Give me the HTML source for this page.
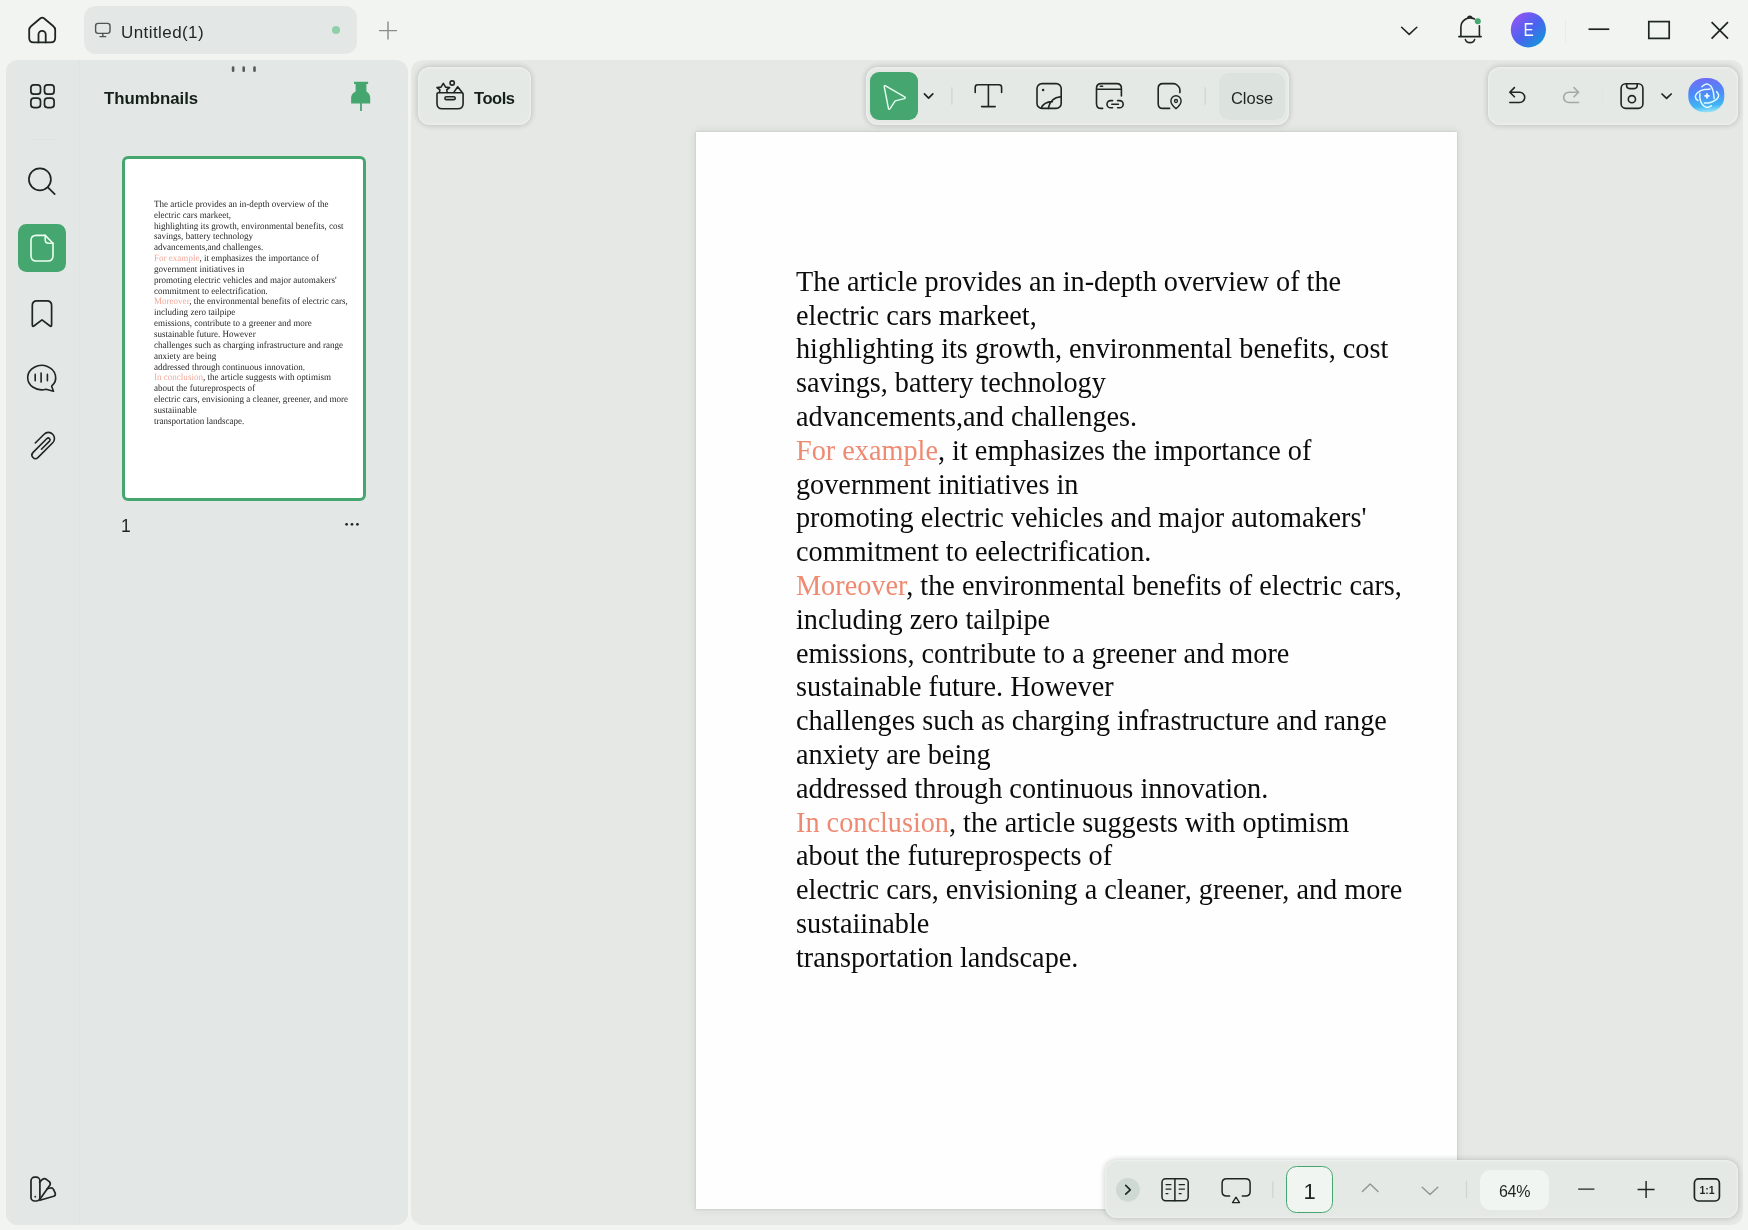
<!DOCTYPE html>
<html lang="en"><head><meta charset="utf-8"><title>Untitled(1)</title>
<style>
*{box-sizing:border-box;margin:0;padding:0}
html,body{width:1748px;height:1230px;overflow:hidden}
body{background:#f2f4f2;font-family:"Liberation Sans","DejaVu Sans",sans-serif;color:#1d2622;position:relative}
.abs{position:absolute}
#tabtxt,#thtitle,#thnum,#toolstxt,#closebtn,#pgbox,#zoombox,#avE{will-change:transform}
svg{position:absolute;overflow:visible}
.ic{fill:none;stroke:#1d2622;stroke-width:1.7;stroke-linecap:round;stroke-linejoin:round}
/* title bar */
#tab{left:84px;top:6px;width:273px;height:48px;border-radius:12px;background:#e3e7e5}
#tabtxt{left:120.5px;top:23px;font-size:17px;line-height:20px;color:#1d2622;letter-spacing:.42px}
#tabdot{left:332px;top:26px;width:8px;height:8px;border-radius:50%;background:#8fd0a9}
/* panels */
#left{left:6px;top:60px;width:402px;height:1165.4px;border-radius:12px;background:#e3e7e5}
#iconcol{left:6px;top:60px;width:74px;height:1165.4px;border-radius:12px 0 0 12px;background:#e3e7e5;border-right:1.5px solid #dfe3e1}
#main{left:411px;top:60px;width:1332px;height:1164.8px;border-radius:12px;background:#e5e8e5;overflow:hidden}
#page{left:696px;top:132px;width:761px;height:1076.6px;background:#fdfefd;box-shadow:0 0 2px rgba(40,50,45,.2),0 0 9px rgba(40,50,45,.1)}
#doc{left:796px;top:264.9px;font-family:"Liberation Serif","DejaVu Serif",serif;font-size:29.6px;line-height:33.8px;color:#0c0c0c;white-space:nowrap;transform:scaleX(.9545);transform-origin:0 0}
.hl{color:#ef8a72}
.card{background:#e5e9e6;border-radius:12px;box-shadow:0 0 5px 1px rgba(50,62,56,.2),inset 0 0 1.5px 1.2px rgba(242,246,243,.6)}
#toolsbtn{left:418px;top:66.8px;width:113px;height:58.2px}
#toolstxt{left:474px;top:87.5px;font-size:16.5px;line-height:20px;font-weight:bold;letter-spacing:-.45px;color:#16201b}
#ctb{left:865.5px;top:66.8px;width:423.5px;height:58.2px}
#selbtn{left:870px;top:72px;width:48px;height:48px;border-radius:9px;background:#46a670}
#closebtn{left:1218.5px;top:72.7px;width:66px;height:46.6px;border-radius:10px;background:#dce2de;font-size:16.5px;line-height:46.6px;text-align:center;padding-top:1.5px;color:#1d2622}
#rtb{left:1488px;top:66.8px;width:249.5px;height:58.2px}
#bbar{left:1105px;top:1160.4px;width:632.6px;height:58px}
#pgbox{left:1286px;top:1166.3px;width:47.4px;height:46.6px;border-radius:10.5px;border:1.5px solid #46a670;background:#f1f5f2;font-size:22px;line-height:44px;text-align:center;padding-top:2.5px;color:#1d2622}
#zoombox{left:1480.2px;top:1169.7px;width:69.3px;height:39.8px;border-radius:11px;background:#f1f5f2;font-size:16px;line-height:39.8px;text-align:center;padding-top:2px;letter-spacing:-.2px;color:#1d2622}
#actbtn{left:18px;top:224px;width:48px;height:47.5px;border-radius:8.5px;background:#46a670}
#thtitle{left:103.5px;top:89px;font-size:16.8px;line-height:20px;font-weight:bold;color:#16201b}
#thumb{left:122px;top:156px;width:244px;height:344.5px;border:3px solid #46a670;border-radius:6px;background:#fff;overflow:hidden}
#tdoc{position:absolute;left:28.5px;top:40.9px;font-family:"Liberation Serif","DejaVu Serif",serif;font-size:9.48px;line-height:10.84px;color:#262626;white-space:nowrap;text-rendering:geometricPrecision;transform:scaleX(.9545);transform-origin:0 0}
#tdoc .hl{color:#f4a999}
#thnum{left:121px;top:515px;font-size:17.5px;line-height:22px;color:#1d2622}
#avE{left:1518px;top:19.2px;width:21px;height:22px;text-align:center;color:#fff;font-size:19px;line-height:22px;transform:scaleX(.8)}
</style></head><body>
<div id="tab" class="abs"></div>
<!-- title bar icons -->
<svg width="1748" height="60" style="left:0;top:0" viewBox="0 0 1748 60">
 <g class="ic" style="stroke-width:1.8">
  <path d="M31 26.2 L40.5 18.3 Q42.2 16.9 43.9 18.3 L53.4 26.2 Q55.2 27.7 55.2 30 V38 Q55.2 42.4 50.8 42.4 H33.6 Q29.2 42.4 29.2 38 V30 Q29.2 27.7 31 26.2 Z"/>
  <path d="M38.5 42.4 V34.5 A3.6 3.6 0 0 1 45.7 34.5 V42.4"/>
 </g>
 <g class="ic" style="stroke:#4d5651;stroke-width:1.4">
  <rect x="95.6" y="23.4" width="14.4" height="10" rx="2.6"/>
  <path d="M102.8 33.4 V36.6 M100 36.6 H105.7"/>
 </g>
 <path d="M379 30.6 H397 M388 21.6 V39.6" class="ic" style="stroke:#868c88;stroke-width:1.4;stroke-linecap:butt"/>
 <path d="M1401.6 27.2 L1409.2 34.4 L1416.8 27.2" class="ic" style="stroke-width:1.55"/>
 <g class="ic" style="stroke-width:1.6">
  <path d="M1458.8 36.6 H1481.2 M1460.9 36.6 V27.2 A9.25 9.25 0 0 1 1474.5 19 M1479.4 25.8 V36.6"/>
  <path d="M1467.9 18.2 A1.9 1.9 0 0 1 1471.7 18.2"/>
  <path d="M1465.4 39.6 A4.7 3.8 0 0 0 1474.6 39.6"/>
 </g>
 <circle cx="1477.8" cy="21.2" r="3" fill="#46a670"/>
 <defs><linearGradient id="av" x1="0.1" y1="0.1" x2="0.9" y2="0.95"><stop offset="0" stop-color="#9355f5"/><stop offset="0.5" stop-color="#4a63ee"/><stop offset="1" stop-color="#0f9ad8"/></linearGradient></defs>
 <circle cx="1528.4" cy="29.8" r="17.6" fill="url(#av)"/>
 <path d="M1565.5 19 V43" stroke="#e9ecea" stroke-width="1"/>
 <path d="M1588.5 29.2 H1609.3" class="ic" style="stroke-linecap:butt"/>
 <rect x="1648.8" y="21.6" width="20.4" height="16.8" class="ic" style="stroke-linejoin:miter"/>
 <path d="M1711.6 22.2 L1728 38.7 M1728 22.2 L1711.6 38.7" class="ic" style="stroke-linecap:butt"/>
</svg>
<div class="abs" id="avE">E</div>

<div id="tabtxt" class="abs">Untitled(1)</div>
<div id="tabdot" class="abs"></div>
<div id="left" class="abs"></div>
<div id="iconcol" class="abs"></div>

<!-- left icon column -->
<div class="abs" id="actbtn"></div>
<svg width="80" height="1170" style="left:0;top:60px" viewBox="0 60 80 1170">
 <g class="ic" style="stroke-width:1.7">
  <rect x="30.9" y="84.8" width="9.6" height="9.4" rx="3"/><rect x="44.5" y="84.8" width="9.6" height="9.4" rx="3"/>
  <rect x="30.9" y="98.2" width="9.6" height="9.4" rx="3"/><rect x="44.5" y="98.2" width="9.6" height="9.4" rx="3"/>
  <circle cx="39.9" cy="179.3" r="11"/><path d="M47.9 187.3 L54.7 194.2"/>
  <path d="M32.3 305.6 Q32.3 300.9 37 300.9 H46.9 Q51.6 300.9 51.6 305.6 V324.8 Q51.6 327.2 49.7 325.8 L42 319.9 L34.2 325.8 Q32.3 327.2 32.3 324.8 Z"/>
  <path d="M51.6 386.2 A14 12.2 0 1 0 46 389.2 L53.5 391.2 Z" style="stroke-width:1.6"/>
  <path d="M35.2 374.4 V380.8 M41.1 373.1 V382.1 M47.4 374.4 V380.8" style="stroke-width:1.6"/>
  <path d="M35.3 443 L44.1 434.2 A6.08 6.08 0 0 1 52.7 442.8 L37.85 457.65 A3.54 3.54 0 0 1 32.85 452.65 L46.95 438.55 A1.84 1.84 0 0 1 49.55 441.15 L41.45 449.25" style="stroke-width:1.6"/>
  <rect x="31" y="1177.2" width="8.9" height="23.8" rx="3.6"/>
  <path d="M39.6 1182.2 L42.4 1179.4 Q44.3 1177.9 46.3 1179.3 L49.3 1181.6 Q51 1183.2 49.8 1185.2 L39.9 1199.3"/>
  <path d="M47.3 1188.8 L50.5 1188 Q52.6 1187.7 53.6 1189.6 L55.2 1193.2 Q55.9 1195.4 53.7 1196.3 L39.9 1200.3"/>
 </g>
 <circle cx="35.3" cy="1196.7" r="0.9" fill="#1d2622"/>
 <path d="M28.5 139.5 H56.5" stroke="#dfe4e1" stroke-width="1"/>
 <g fill="none" stroke="#eafff1" stroke-width="1.6" stroke-linejoin="round" stroke-linecap="round">
  <path d="M45.2 235.4 H36.2 Q31 235.4 31 240.6 V255.8 Q31 261 36.2 261 H47.8 Q53 261 53 255.8 V243.2 Z"/>
  <path d="M45.2 235.4 V239.8 Q45.2 243.2 48.6 243.2 H53"/>
 </g>
</svg>
<!-- thumbnails panel -->
<div class="abs" id="thtitle">Thumbnails</div>
<svg width="330" height="60" style="left:80px;top:60px" viewBox="80 60 330 60">
 <g fill="#555d59"><rect x="231.8" y="66.2" width="2.6" height="5.8" rx="1.3"/><rect x="242.4" y="66.2" width="2.6" height="5.8" rx="1.3"/><rect x="253.2" y="66.2" width="2.6" height="5.8" rx="1.3"/></g>
 <path d="M354 81.8 H368.1 V83.9 H366.4 V91.4 Q370.2 93.4 370.2 98 V103.5 H361.9 V110.9 H360.1 V103.5 H351.1 V98 Q351.1 93.4 355.6 91.4 V83.9 H354 Z" fill="#46a670"/>
</svg>
<div class="abs" id="thumb"><div id="tdoc">The article provides an in-depth overview of the<br>electric cars markeet,<br>highlighting its growth, environmental benefits, cost<br>savings, battery technology<br>advancements,and challenges.<br><span class="hl">For example</span>, it emphasizes the importance of<br>government initiatives in<br>promoting electric vehicles and major automakers'<br>commitment to eelectrification.<br><span class="hl">Moreover</span>, the environmental benefits of electric cars,<br>including zero tailpipe<br>emissions, contribute to a greener and more<br>sustainable future. However<br>challenges such as charging infrastructure and range<br>anxiety are being<br>addressed through continuous innovation.<br><span class="hl">In conclusion</span>, the article suggests with optimism<br>about the futureprospects of<br>electric cars, envisioning a cleaner, greener, and more<br>sustaiinable<br>transportation landscape.</div></div>
<div class="abs" id="thnum">1</div>
<svg width="20" height="6" style="left:343px;top:521px" viewBox="0 0 20 6"><g fill="#1d2622"><circle cx="3.6" cy="3.3" r="1.35"/><circle cx="9" cy="3.3" r="1.35"/><circle cx="14.4" cy="3.3" r="1.35"/></g></svg>
<div id="main" class="abs"></div>
<div id="page" class="abs"></div>
<div id="doc" class="abs">The article provides an in-depth overview of the<br>electric cars markeet,<br>highlighting its growth, environmental benefits, cost<br>savings, battery technology<br>advancements,and challenges.<br><span class="hl">For example</span>, it emphasizes the importance of<br>government initiatives in<br>promoting electric vehicles and major automakers'<br>commitment to eelectrification.<br><span class="hl">Moreover</span>, the environmental benefits of electric cars,<br>including zero tailpipe<br>emissions, contribute to a greener and more<br>sustainable future. However<br>challenges such as charging infrastructure and range<br>anxiety are being<br>addressed through continuous innovation.<br><span class="hl">In conclusion</span>, the article suggests with optimism<br>about the futureprospects of<br>electric cars, envisioning a cleaner, greener, and more<br>sustaiinable<br>transportation landscape.</div>

<!-- Tools button -->
<div class="abs card" id="toolsbtn"></div>
<svg width="34" height="34" style="left:433px;top:78px" viewBox="433 78 34 34">
 <g class="ic" style="stroke-width:1.6">
  <path d="M437 94 Q437 92.8 438.2 92.8 H461.9 Q463.1 92.8 463.1 94 V103.4 Q463.1 108.7 457.8 108.7 H442.3 Q437 108.7 437 103.4 Z"/>
  <rect x="444.9" y="96.7" width="10.3" height="2.9" rx="1.45"/>
  <path d="M439.4 92.4 L439.9 89.9 L437 87.6 L441 87.1 L443.3 83.4 L445.6 87.1 L449.6 87.6 L446.7 89.9 L447.3 92.4"/>
  <circle cx="452.2" cy="83" r="2.15"/>
  <path d="M453.8 92.4 L457.7 86.8 L462.2 92.4"/>
 </g>
</svg>
<div class="abs" id="toolstxt">Tools</div>
<!-- centre toolbar -->
<div class="abs card" id="ctb"></div>
<div class="abs" id="selbtn"></div>
<div class="abs" id="closebtn">Close</div>
<svg width="430" height="60" style="left:864px;top:66px" viewBox="864 66 430 60">
 <path d="M885.6 85.8 L904.6 96.9 Q906.2 98 904.3 98.6 L895.2 100.9 L890.1 108.6 Q888.9 110.1 888.4 108.2 L884.3 87 Q884 84.9 885.6 85.8 Z" fill="none" stroke="#e6fff0" stroke-width="1.4" stroke-linejoin="round"/>
 <path d="M924.4 93.9 L928.6 98.1 L932.8 93.9" class="ic" style="stroke-width:1.7"/>
 <path d="M951.9 87.2 V104.8 M1205.2 87.2 V104.8" stroke="#cdd4d0" stroke-width="1.2"/>
 <g class="ic" style="stroke-width:1.6">
  <path d="M975.2 92.4 V87.4 Q975.2 84.8 977.8 84.8 H999 Q1001.6 84.8 1001.6 87.4 V92.4 M988.4 84.8 V106.6 M981.6 106.6 H995.2"/>
  <rect x="1037" y="83.6" width="24.2" height="24.8" rx="5"/>
  <path d="M1061.2 96.6 Q1050 97.6 1048.3 108.4 M1052.4 101.6 Q1043.6 101.8 1041.2 108.2"/>
  <path d="M1102.6 108.4 H1101.2 Q1096.5 108.4 1096.5 103.7 V88.3 Q1096.5 83.6 1101.2 83.6 H1116.7 Q1121.4 83.6 1121.4 88.3 V96 M1096.5 89.2 H1121.4 M1100.4 86.2 H1102.6"/>
  <path d="M1112.6 100.6 H1110.6 A3.6 3.6 0 0 0 1110.6 107.8 H1112.6 M1117.6 100.6 H1119.6 A3.6 3.6 0 0 1 1119.6 107.8 H1117.6 M1111.8 104.2 H1118.4"/>
  <path d="M1169.6 108.4 H1162.9 Q1158.2 108.4 1158.2 103.7 V88.3 Q1158.2 83.6 1162.9 83.6 H1173.6 Q1175.6 83.6 1177 85 L1178.5 86.5 Q1179.9 87.9 1179.9 89.9 V92.6"/>
  <path d="M1176 108.6 Q1170.9 104.4 1170.9 100.9 A5.1 5.1 0 0 1 1181.1 100.9 Q1181.1 104.4 1176 108.6 Z" style="stroke-width:1.4"/>
  <circle cx="1176" cy="101" r="1.5" style="stroke-width:1.3"/>
 </g>
 <circle cx="1043.1" cy="89.9" r="1.25" fill="#1d2622"/>
</svg>
<!-- right toolbar -->
<div class="abs card" id="rtb"></div>
<svg width="256" height="60" style="left:1486px;top:66px" viewBox="1486 66 256 60">
 <defs>
  <linearGradient id="aig" x1="0.45" y1="0" x2="0.55" y2="1"><stop offset="0" stop-color="#6f6cf6"/><stop offset="0.45" stop-color="#4c8cf7"/><stop offset="0.8" stop-color="#3fb4f5"/><stop offset="1" stop-color="#9be4f6"/></linearGradient><filter id="aib" x="-10%" y="-10%" width="120%" height="120%"><feGaussianBlur stdDeviation="0.55"/></filter>
 </defs>
 <g class="ic" style="stroke-width:1.6">
  <path d="M1514.4 87.6 L1509.8 92.2 L1514.4 96.8 M1509.8 92.2 H1519.6 A5.15 5.15 0 0 1 1519.6 102.5 H1509.8"/>
  <path d="M1574 87.6 L1578.6 92.2 L1574 96.8 M1578.6 92.2 H1568.8 A5.15 5.15 0 0 0 1568.8 102.5 H1578.6" style="stroke:#a3a9a5"/>
  <rect x="1621.1" y="83.8" width="21.8" height="24.6" rx="4.6"/>
  <path d="M1626.6 83.8 V85.6 Q1626.6 88.6 1629.6 88.6 H1634.2 Q1637.2 88.6 1637.2 85.6 V83.8"/>
  <circle cx="1631.9" cy="99.2" r="3.6"/>
  <path d="M1662 94 L1666.6 98.4 L1671.2 94" style="stroke-width:1.7"/>
 </g>
 <path d="M1602 86 V106" stroke="#dfe4e1" stroke-width="1"/>
 <rect x="1688.3" y="77.9" width="36" height="34.4" rx="16.5" ry="15.5" fill="url(#aig)" filter="url(#aib)"/>
 <path d="M1701.95 86.67 C1702.43 86.33 1703.85 85.05 1704.80 84.63 C1705.75 84.21 1706.63 83.88 1707.64 84.15 C1708.66 84.42 1709.98 85.09 1710.89 86.26 C1711.81 87.43 1712.59 89.11 1713.13 91.14 C1713.67 93.17 1713.98 97.24 1714.15 98.46 M1710.08 89.11 C1709.13 89.17 1706.22 89.11 1704.39 89.51 C1702.56 89.92 1700.56 90.60 1699.11 91.54 C1697.65 92.49 1696.19 94.05 1695.65 95.20 C1695.11 96.36 1695.48 97.57 1695.85 98.46 C1696.23 99.34 1697.55 100.15 1697.89 100.49 M1716.59 91.54 C1716.92 92.15 1718.48 94.05 1718.62 95.20 C1718.75 96.36 1718.41 97.37 1717.40 98.46 C1716.38 99.54 1714.08 100.96 1712.52 101.71 C1710.96 102.45 1709.40 102.72 1708.05 102.93 C1706.69 103.13 1705.00 102.93 1704.39 102.93 M1699.92 93.58 C1699.92 94.39 1699.65 96.83 1699.92 98.46 C1700.19 100.08 1700.66 101.94 1701.54 103.33 C1702.43 104.72 1704.05 106.14 1705.20 106.79 C1706.36 107.43 1707.44 107.36 1708.46 107.20 C1709.47 107.03 1710.83 106.01 1711.30 105.77" fill="none" stroke="#e2fbff" stroke-width="1.5" stroke-linecap="round"/>
 <path d="M1707 93.3 L1707.7 95.2 L1709.6 95.9 L1707.7 96.6 L1707 98.5 L1706.3 96.6 L1704.4 95.9 L1706.3 95.2 Z" fill="#fff" stroke="#fff" stroke-width=".9" stroke-linejoin="round"/>
</svg>
<!-- bottom bar -->
<div class="abs card" id="bbar"></div>
<div class="abs" id="pgbox">1</div>
<div class="abs" id="zoombox">64%</div>
<svg width="640" height="62" style="left:1104px;top:1159px" viewBox="1104 1159 640 62">
 <circle cx="1127.9" cy="1189.8" r="11.9" fill="#cfd9d3"/>
 <path d="M1125.7 1185.4 L1130.3 1189.8 L1125.7 1194.2" class="ic" style="stroke-width:1.6"/>
 <g class="ic" style="stroke-width:1.5">
  <rect x="1162" y="1178.7" width="26.2" height="22" rx="3.6"/>
  <path d="M1174.9 1178.7 V1200.7"/>
  <path d="M1165.6 1184.7 H1171.4 M1165.6 1189.1 H1171.4 M1165.6 1193.6 H1168.4 M1178.7 1184.7 H1184.9 M1178.7 1189.1 H1184.9 M1178.7 1193.6 H1181.6" style="stroke-width:1.3;stroke-linecap:butt"/>
  <path d="M1229.6 1196.1 H1226.6 Q1222.1 1196.1 1222.1 1191.6 V1183.2 Q1222.1 1178.7 1226.6 1178.7 H1245.6 Q1250.1 1178.7 1250.1 1183.2 V1191.6 Q1250.1 1196.1 1245.6 1196.1 H1242.3"/>
  <path d="M1236 1197.2 L1239.5 1202.7 H1232.5 Z" style="stroke-width:1.3"/>
  <rect x="1694.4" y="1178.8" width="25" height="22.2" rx="4.2" style="stroke-width:1.7"/>
 </g>
 <path d="M1272.8 1181.5 V1198 M1466.5 1180.8 V1198.2" stroke="#cdd4d0" stroke-width="1.2"/>
 <path d="M1362.4 1191.6 L1370.2 1184 L1378 1191.6 M1422.2 1187.2 L1430 1194.6 L1437.8 1187.2" class="ic" style="stroke:#8f9692;stroke-width:1.4"/>
 <path d="M1578.2 1189.1 H1594.4 M1637.6 1189.4 H1654.6 M1646.1 1180.9 V1197.9" class="ic" style="stroke-width:1.45;stroke-linecap:butt"/>
 <text x="1707" y="1193.8" text-anchor="middle" font-family="Liberation Sans, DejaVu Sans, sans-serif" font-weight="bold" font-size="10.5" fill="#1d2622">1:1</text>
</svg>
</body></html>
